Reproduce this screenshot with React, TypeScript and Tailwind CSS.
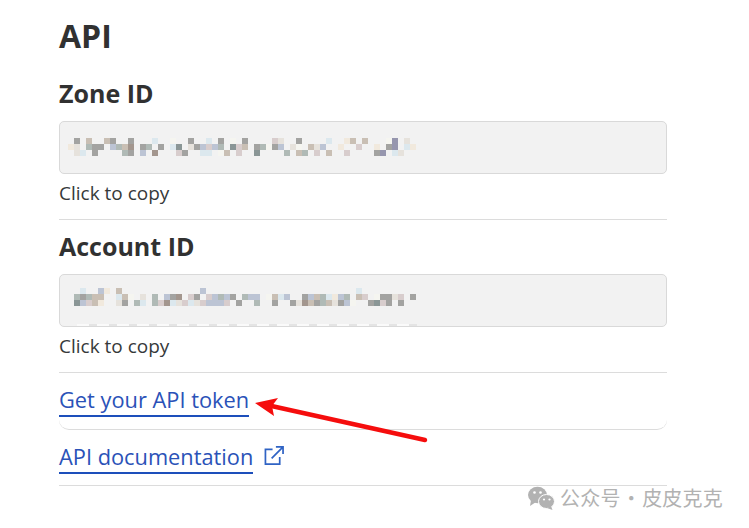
const PALETTE: Record<string, string> = {
  a: "#a3a3a1",
  b: "#c9bfb4",
  c: "#dce8ee",
  d: "#f1e9dd",
  e: "#bcc4d4",
  f: "#8a9696",
  g: "#d8cdcd",
  h: "#b0bab6",
  i: "#e6e2dc",
  j: "#f5f5f0",
  k: "#9696ae",
  l: "#a3968e",
};

const ZONE_ROWS = [
  " a b  ba  a   c  j  a  c a j a    gi  a    c  db b   jk i",
  "di haa ehbl ah a cf iaegeh fgb ahjae ij bie  d  g  d ak cd c",
  " ic a    ha e l   ga  cc jb g  f    h bh g b  g    ak ci",
];

const ACCOUNT_ROWS = [
  " c  ed b             e                         c",
  "hahbb  cbj i h eal ga gehea hee jbce  aebhcdeh bg jaaig a",
  "fegbd  ia hc hglcigcigeeeg a  h  a  ailbahbiaej  afga a",
];

const Mosaic = ({ rows }: { rows: string[] }) => (
  <svg width={350} height={rows.length * 6} className="block">
    {rows.map((row, y) =>
      row.split("").map((ch, x) =>
        PALETTE[ch] ? (
          <rect key={`${x}-${y}`} x={x * 6} y={y * 6} width={6} height={6} fill={PALETTE[ch]} />
        ) : null
      )
    )}
  </svg>
);

const Arrow = () => (
  <svg
    className="absolute top-[392px] left-[252px]"
    width={180}
    height={52}
    viewBox="0 0 180 52"
    fill="none"
  >
    <path d="M15 13 L173 48" stroke="#f50d0d" strokeWidth={4.5} strokeLinecap="round" />
    <path d="M3 11 L26 6 L20 14 L22 24 Z" fill="#f50d0d" />
  </svg>
);

const WechatIcon = () => (
  <svg width={28} height={24} viewBox="0 0 28 24" fill="#b2b2b2">
    <ellipse cx="10.5" cy="9" rx="9.5" ry="8.2" />
    <path d="M4 14 L3 20 L9 16 Z" />
    <ellipse cx="19.5" cy="15.5" rx="8" ry="7" stroke="#ffffff" strokeWidth={1} />
    <path d="M24 20 L25.5 24 L20 22 Z" />
    <circle cx="7.5" cy="6.5" r="1.3" fill="#ffffff" />
    <circle cx="13.5" cy="6.5" r="1.3" fill="#ffffff" />
    <circle cx="17" cy="13.5" r="1.1" fill="#ffffff" />
    <circle cx="22.5" cy="13.5" r="1.1" fill="#ffffff" />
  </svg>
);

const App = () => {
  return (
    <div className="relative h-[528px] w-[749px] overflow-hidden bg-white font-['Open_Sans',sans-serif]">
      <main className="w-[667px] pt-[12px] pl-[59px]">
        <h1 className="text-[32px] leading-[48px] font-bold text-[#313131]">API</h1>
        <div className="mt-[16px] flex flex-col gap-[9px]">
          <section className="border-b border-[#dcdcdc] pb-[12px]">
            <h2 className="text-[25px] leading-[34px] font-bold text-[#313131]">Zone ID</h2>
            <div className="mt-[11px] h-[53px] overflow-hidden rounded-[5px] border border-[#d9d9d9] bg-[#f2f2f2] pt-[16px] pl-[8px]">
              <Mosaic rows={ZONE_ROWS} />
            </div>
            <p className="mt-[6px] text-[19px] leading-[27px] text-[#36393a]">Click to copy</p>
          </section>
          <section className="border-b border-[#dcdcdc] pb-[12px]">
            <h2 className="text-[25px] leading-[34px] font-bold text-[#313131]">Account ID</h2>
            <div className="relative mt-[11px] h-[53px] overflow-hidden rounded-[5px] border border-[#d9d9d9] bg-[#f2f2f2] pt-[13px] pl-[14px]">
              <Mosaic rows={ACCOUNT_ROWS} />
              <div className="absolute bottom-0 left-[17px] h-[2px] w-[340px] bg-[repeating-linear-gradient(90deg,#fafafa_0_12px,#e4e4e4_12px_20px)]" />
            </div>
            <p className="mt-[6px] text-[19px] leading-[27px] text-[#36393a]">Click to copy</p>
          </section>
        </div>
        <div className="h-[57px] rounded-b-[10px] border-b border-[#dcdcdc] pt-[12px]">
          <a className="inline-block border-b-2 border-[#1d4fbb] text-[21.8px] leading-[30px] text-[#2a52b8]">
            Get your API token
          </a>
        </div>
        <div className="flex h-[56px] items-start gap-[11px] border-b border-[#dcdcdc] pt-[12px]">
          <a className="inline-block border-b-2 border-[#1d4fbb] text-[21.8px] leading-[30px] text-[#2a52b8]">
            API documentation
          </a>
          <svg
            className="mt-[4px]"
            width={20}
            height={20}
            viewBox="0 0 21 21"
            fill="none"
            stroke="#2f63c4"
            strokeWidth={1.8}
          >
            <path d="M9 3.5 H1.5 V19 H16.5 V11.5" />
            <path d="M8 13 L19.5 1.5 M12.5 1 H20 V8.5" />
          </svg>
        </div>
      </main>
      <Arrow />
      <div className="absolute top-[486px] left-[527px] flex items-center gap-[5px] font-['Noto_Sans_CJK_SC',sans-serif] text-[20px] leading-[24px] tracking-[0.2px] [word-spacing:-4px] text-[#b2b2b2]">
        <WechatIcon />
        <span>公众号 · 皮皮克克</span>
      </div>
    </div>
  );
};

export default App;
